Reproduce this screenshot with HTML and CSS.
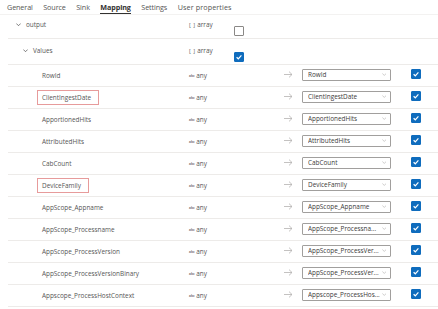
FILE: index.html
```html
<!DOCTYPE html>
<html>
<head>
<meta charset="utf-8">
<link rel="stylesheet" href="styles.css">
</head>
<body>
<nav class="tabs">
  <span class="tab">General</span>
  <span class="tab">Source</span>
  <span class="tab">Sink</span>
  <span class="tab active">Mapping</span>
  <span class="tab">Settings</span>
  <span class="tab">User properties</span>
</nav>
<div class="list">
  <div class="row head out">
    <div class="name lvl0"><svg class="chev" viewBox="0 0 8 5"><path d="M0.5 0.5 L4 4 L7.5 0.5" fill="none" stroke="#444" stroke-width="1.1"/></svg>output</div>
    <div class="type"><span class="br">[ ]</span> array</div>
    <div class="cbwrap"><span class="cb"></span></div>
  </div>
  <div class="row head vals">
    <div class="name lvl1"><svg class="chev" viewBox="0 0 8 5"><path d="M0.5 0.5 L4 4 L7.5 0.5" fill="none" stroke="#444" stroke-width="1.1"/></svg>Values</div>
    <div class="type"><span class="br">[ ]</span> array</div>
    <div class="cbwrap"><span class="cb on"><svg viewBox="0 0 10 10"><path d="M2.6 5.2 L4.3 6.8 L7.4 3.4" fill="none" stroke="#fff" stroke-width="1.2"/></svg></span></div>
  </div>
  <div id="rows"></div>
</div>
<script src="app.js"></script>
</body>
</html>
```
FILE: app.js
```js
const data = [
  ["RowId", "RowId", false],
  ["ClientIngestDate", "ClientIngestDate", true],
  ["ApportionedHits", "ApportionedHits", false],
  ["AttributedHits", "AttributedHits", false],
  ["CabCount", "CabCount", false],
  ["DeviceFamily", "DeviceFamily", true],
  ["AppScope_Appname", "AppScope_Appname", false],
  ["AppScope_Processname", "AppScope_Processna...", false],
  ["AppScope_ProcessVersion", "AppScope_ProcessVer...", false],
  ["AppScope_ProcessVersionBinary", "AppScope_ProcessVer...", false],
  ["Appscope_ProcessHostContext", "Appscope_ProcessHos...", false]
];
const host = document.getElementById("rows");
for (const [name, target, mark] of data) {
  const row = document.createElement("div");
  row.className = "row item";
  row.innerHTML =
    '<div class="name lvl2"><span class="label' + (mark ? ' marked' : '') + '">' + name + '</span></div>' +
    '<div class="type"><span class="abc">abc</span> any</div>' +
    '<div class="arrow"><svg viewBox="0 0 9 7"><path d="M0 3.5 H8 M5 0.6 L8 3.5 L5 6.4" fill="none" stroke="#b5b3b1" stroke-width="0.8"/></svg></div>' +
    '<div class="dd"><span class="ddtext">' + target + '</span><svg class="ddchev" viewBox="0 0 6 4"><path d="M0.5 0.8 L3 3.2 L5.5 0.8" fill="none" stroke="#a19f9d" stroke-width="0.7"/></svg></div>' +
    '<div class="cbcell"><span class="cb on"><svg viewBox="0 0 10 10"><path d="M2.6 5.2 L4.3 6.8 L7.4 3.4" fill="none" stroke="#fff" stroke-width="1.2"/></svg></span></div>';
  host.appendChild(row);
}
```
FILE: styles.css
```css
html, body {
  margin: 0;
  padding: 0;
  background: #fff;
}
body {
  width: 438px;
  height: 309px;
  overflow: hidden;
  font-family: "Open Sans", "Noto Sans", sans-serif;
  color: #484644;
}
.tabs {
  display: flex;
  height: 15px;
  padding-left: 7px;
  border-bottom: 1px solid #f3f2f1;
  box-sizing: border-box;
}
.tab {
  font-size: 7.2px;
  line-height: 14px;
  color: #555;
  margin-right: 10.5px;
  letter-spacing: -0.1px;
}
.tab:last-child {
  letter-spacing: 0.1px;
}
.tab.active {
  font-weight: 700;
  color: #323130;
  border-bottom: 1.5px solid #323130;
  box-sizing: border-box;
}
.list {
  display: flex;
  flex-direction: column;
}
.row {
  margin-left: 8px;
  border-bottom: 1px solid #edebe9;
  display: grid;
  font-size: 6.4px;
  box-sizing: border-box;
}
.row.head {
  grid-template-columns: 180px 46px 10px;
  align-items: start;
}
.row.out {
  height: 24px;
  padding-top: 5px;
}
.row.vals {
  height: 26px;
  padding-top: 7px;
}
.row.out .cbwrap { margin-top: 6px; }
.row.vals .cbwrap { margin-top: 6px; }
.row.item {
  grid-template-columns: 180px 46px 68px 89px 20px 11px;
  height: 22px;
  align-items: center;
}
.name {
  display: flex;
  align-items: center;
  line-height: 10px;
  white-space: nowrap;
  color: #555;
}
.lvl0 { padding-left: 8px; }
.lvl1 { padding-left: 15px; }
.lvl2 { padding-left: 34px; }
.chev {
  width: 5px;
  height: 3.5px;
  margin-right: 5px;
}
.label {
  padding: 2px 7px 2px 4px;
  margin-left: -5px;
  border: 1px solid transparent;
  line-height: 9px;
}
.label.marked {
  border-color: #e79b9b;
}
.type {
  line-height: 10px;
  white-space: nowrap;
  color: #555;
  padding-left: 1px;
}
.br {
  font-size: 5.5px;
  letter-spacing: 0.5px;
}
.abc {
  font-size: 3.2px;
  font-weight: 700;
  color: #777;
  vertical-align: 1px;
}
.cb {
  display: block;
  width: 10px;
  height: 10px;
  box-sizing: border-box;
  border: 1px solid #8a8886;
  border-radius: 1px;
  background: #fff;
}
.cb.on {
  background: #0f6cbd;
  border-color: #0f6cbd;
}
.cb svg {
  display: block;
  width: 10px;
  height: 10px;
  margin: -1px;
}
.arrow {
  padding-left: 50px;
  display: flex;
  margin-top: -2px;
}
.arrow svg {
  width: 9px;
  height: 7px;
}
.dd {
  height: 12px;
  border: 1px solid #a19f9d;
  border-radius: 1px;
  box-sizing: border-box;
  display: flex;
  align-items: center;
  padding: 0 4px 0 5px;
  margin-top: -2px;
}
.ddtext {
  flex: 1;
  font-size: 6.4px;
  color: #3b3a39;
  white-space: nowrap;
  overflow: hidden;
}
.ddchev {
  width: 4.5px;
  height: 3px;
}
.cbcell {
  grid-column: 6;
  margin-top: -3px;
}
```
